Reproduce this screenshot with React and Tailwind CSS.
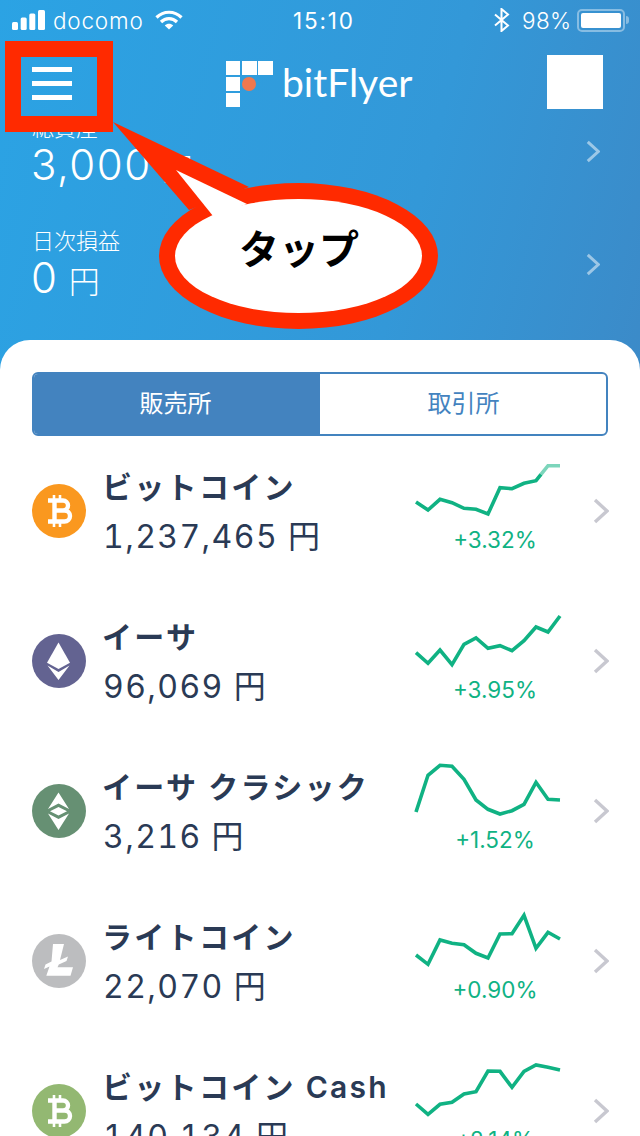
import React from 'react';

const coins = [
  {
    name: 'ビットコイン',
    price: '1,237,465',
    change: '+3.32%',
    icon: 'btc',
    color: 'bg-[#fa981f]',
    spark: [42, 50, 39.3, 42.7, 48.3, 49.3, 54, 27.7, 28.7, 23.3, 20.7, 5.7, 5.7],
    fade: true,
  },
  {
    name: 'イーサ',
    price: '96,069',
    change: '+3.95%',
    icon: 'eth',
    color: 'bg-[#636391]',
    spark: [42.7, 53.3, 40, 54.7, 34.3, 28, 38.3, 35.7, 40.7, 30.7, 17, 22, 6],
  },
  {
    name: 'イーサ クラシック',
    price: '3,216',
    change: '+1.52%',
    icon: 'etc',
    color: 'bg-[#669073]',
    spark: [52, 15.3, 5.3, 6.3, 19.3, 40, 49.3, 54, 50.7, 44.3, 22.3, 39.3, 40],
  },
  {
    name: 'ライトコイン',
    price: '22,070',
    change: '+0.90%',
    icon: 'ltc',
    color: 'bg-[#bcbdbf]',
    spark: [45, 54.3, 30, 33.3, 34.7, 43.3, 48, 24, 23.7, 5.3, 38.3, 22.3, 29],
  },
  {
    name: 'ビットコイン Cash',
    price: '140,134',
    change: '+2.14%',
    icon: 'btc',
    color: 'bg-[#93b872]',
    spark: [44, 54.3, 44.3, 42.3, 34, 31.7, 11, 11.3, 27.3, 11.3, 5, 7.3, 10],
  },
];

const CoinGlyph = ({ type }) => {
  if (type === 'btc') {
    return (
      <svg className="w-[54px] h-[54px]" viewBox="0 0 54 54">
        <path
          d="M16 16.5H31a5 5 0 0 1 0 10H22.5M22.5 26.5H32.5a5.5 5.5 0 0 1 0 11H16M22.5 16.5V37.5"
          fill="none"
          stroke="#fff"
          strokeWidth="4.4"
        />
        <path d="M22 11v5M28 11v5M22 38v5M28 38v5" stroke="#fff" strokeWidth="2.6" />
      </svg>
    );
  }
  if (type === 'eth') {
    return (
      <svg className="w-[54px] h-[54px]" viewBox="0 0 54 54" fill="#fff">
        <path d="M26.5 8.5L15 28.7L26.5 35L38 28.7Z" />
        <path d="M15.5 31.5L26.5 38L37.5 31.5L26.5 46Z" />
      </svg>
    );
  }
  if (type === 'etc') {
    return (
      <svg className="w-[54px] h-[54px]" viewBox="0 0 54 54" fill="#fff">
        <path d="M26.5 8.5L16 25L26.5 19.5L37 25Z" />
        <path d="M18 27.2L26.5 23L35 27.2L26.5 31.5Z" />
        <path d="M16 29.5L26.5 35L37 29.5L26.5 46Z" />
      </svg>
    );
  }
  return (
    <svg className="w-[54px] h-[54px]" viewBox="0 0 54 54" fill="#fff">
      <path d="M21 10H32L28 26L36 22.5L34.5 27L26.8 30.5L25.5 33.3H41L38.5 41.7H14.3L17.5 32.5L12 35L13.5 30.5L19.5 27.5Z" />
    </svg>
  );
};

const Sparkline = ({ points, fade }) => {
  const coords = points.map((y, i) => [4 + i * 12, y]);
  // first row: the tail of the line is washed out at the top of the chart
  const solid = fade ? [...coords.slice(0, -2), [129, 14.4]] : coords;
  return (
    <svg className="w-[152px] h-[60px]" viewBox="0 0 152 60" fill="none" stroke="#10b283" strokeWidth="3.6">
      <polyline points={solid.map((p) => p.join(',')).join(' ')} strokeLinejoin="miter" />
      {fade && <polyline points="129,14.4 136,5.7 148,5.7" opacity="0.55" />}
    </svg>
  );
};

const Chevron = ({ className }) => (
  <svg className={className} viewBox="0 0 16 26" fill="none" stroke="currentColor" strokeWidth="3.4">
    <polyline points="2,2 14,13 2,24" />
  </svg>
);

const CoinRow = ({ coin }) => (
  <div className="flex items-center h-[150px] pl-8 shrink-0">
    <div className={`w-[54px] h-[54px] rounded-full ${coin.color}`}>
      <CoinGlyph type={coin.icon} />
    </div>
    <div className="ml-4 mt-[2px] w-[310px] text-[#2a3a55]">
      <div className="h-[50px] leading-[50px] text-[30px] font-semibold tracking-[2.3px] whitespace-nowrap">
        {coin.name}
      </div>
      <div className="ml-px h-[50px] leading-[50px] text-[32px] tabular-nums tracking-[1.4px] whitespace-nowrap">
        {coin.price} 円
      </div>
    </div>
    <div className="w-[152px] flex flex-col items-center mb-[7px]">
      <Sparkline points={coin.spark} fade={coin.fade} />
      <div className="ml-[14px] mt-[5px] h-[30px] leading-[30px] text-[22.5px] text-[#10b283]">{coin.change}</div>
    </div>
    <Chevron className="ml-[29px] w-4 h-[26px] text-[#c8c8d0]" />
  </div>
);

const StatusBar = () => (
  <div className="flex items-center h-10 text-white text-[22.5px] font-light">
    <svg className="ml-3 w-[33px] h-[20px]" viewBox="0 0 33 20" fill="#fff">
      <rect x="0" y="12" width="6" height="8" rx="1.5" />
      <rect x="8.7" y="7.5" width="6" height="12.5" rx="1.5" />
      <rect x="17.3" y="3.5" width="6" height="16.5" rx="1.5" />
      <rect x="26" y="0" width="7" height="20" rx="1.5" />
    </svg>
    <span className="ml-2 w-[90px] tracking-[0.8px] pt-[2px]">docomo</span>
    <svg className="ml-3 w-7 h-5" viewBox="0 0 28 20" fill="none" stroke="#fff" strokeWidth="3.2">
      <path d="M1.5 7.5C8.5 0.5 19.5 0.5 26.5 7.5" />
      <path d="M6 12C10.5 7.5 17.5 7.5 22 12" />
      <path d="M14 19.5L9.8 15.5C12 13.3 16 13.3 18.2 15.5Z" fill="#fff" stroke="none" />
    </svg>
    <span className="ml-[110px] w-[62px] font-normal tracking-[1.8px] pt-[2px]">15:10</span>
    <svg className="ml-[139px] w-[16px] h-[24px]" viewBox="0 0 16 24" fill="none" stroke="#fff" strokeWidth="2">
      <path d="M1 6.5L14 17.5L7.5 23V1L14 6.5L1 17.5" />
    </svg>
    <span className="ml-3 w-[50px] tracking-[0.4px] pt-[2px]">98%</span>
    <div className="ml-[5px] flex items-center">
      <div className="w-12 h-[23px] rounded-[5px] border-2 border-white/40 p-[2px]">
        <div className="w-full h-full rounded-[2px] bg-white" />
      </div>
      <div className="ml-[1px] w-[3px] h-2 rounded-r-sm bg-white/40" />
    </div>
  </div>
);

const NavBar = () => (
  <div className="flex items-start h-[73px] pt-[15px] pl-8">
    <div className="mt-3 w-10 flex flex-col gap-[9px]">
      <div className="h-[5px] bg-white" />
      <div className="h-[5px] bg-white" />
      <div className="h-[5px] bg-white" />
    </div>
    <div className="ml-[154px] mt-[6px] flex items-center">
      <svg className="w-[47px] h-[46px]" viewBox="0 0 47 46">
        <g fill="#fff">
          <rect x="0" y="0" width="14" height="14" />
          <rect x="16" y="0" width="15" height="14" />
          <rect x="32" y="0" width="15" height="14" />
          <rect x="0" y="16" width="14" height="14" />
          <rect x="0" y="32" width="14" height="14" />
        </g>
        <circle cx="23" cy="23" r="7" fill="#f0784f" />
      </svg>
      <span className="ml-[9px] -mt-1 text-white text-[39px] leading-[46px] font-['Lato',sans-serif]">bitFlyer</span>
    </div>
    <div className="ml-auto mr-[37px] w-14 h-[54px] bg-white" />
  </div>
);

const BalanceRow = ({ label, value }) => (
  <div className="flex items-center justify-between h-[74px] pl-8 pr-10 text-white">
    <div>
      <div className="h-[30px] leading-[30px] text-[22px] font-light">{label}</div>
      <div className="-ml-px h-[44px] leading-[44px] text-[42px] font-light tracking-[1.5px] whitespace-nowrap">
        {value}
        <span className="text-[31px]"> 円</span>
      </div>
    </div>
    <Chevron className="mt-[3px] w-[14px] h-[23px] text-white/50" />
  </div>
);

const App = () => {
  return (
    <div className="relative w-[640px] h-[1136px] overflow-hidden flex flex-col bg-[linear-gradient(105deg,#2ba3e4_0%,#3398d8_50%,#4280bc_100%)] font-['Inter','Noto_Sans_CJK_JP',sans-serif]">
      <StatusBar />
      <NavBar />

      {/* Balances */}
      <div className="flex flex-col gap-[39px] h-[227px]">
        <BalanceRow label="総資産" value="3,000" />
        <BalanceRow label="日次損益" value="0" />
      </div>

      {/* Market list */}
      <div className="flex-1 flex flex-col bg-white rounded-t-[30px] pt-8 overflow-hidden">
        <div className="mx-8 h-16 shrink-0 flex rounded-md border-2 border-[#4383bf] overflow-hidden text-[24px]">
          <div className="w-[286px] pr-[3px] flex items-center justify-center bg-[#4383bf] text-white">販売所</div>
          <div className="flex-1 pl-px flex items-center justify-center text-[#4383bf]">取引所</div>
        </div>
        {coins.map((coin) => (
          <CoinRow key={coin.name} coin={coin} />
        ))}
      </div>

      {/* Tap annotation */}
      <div className="absolute left-[5px] top-[41px] w-[108px] h-[91px] border-[16px] border-[#ff2a00]" />
      <svg className="absolute left-0 top-0 w-[640px] h-[340px]" viewBox="0 0 640 340">
        <polygon points="113,122 249,187 189,210" fill="#ff2a00" />
        <ellipse cx="298.5" cy="256" rx="139.5" ry="73" fill="#ff2a00" />
        <ellipse cx="298.5" cy="256" rx="123.5" ry="57" fill="#fff" />
        <polygon points="176,170 247,204 213,216" fill="#fff" />
      </svg>
      <div className="absolute left-[238px] top-[223px] w-[122px] h-[54px] leading-[54px] text-center text-black text-[40px] font-bold whitespace-nowrap">
        タップ
      </div>
    </div>
  );
};

export default App;
